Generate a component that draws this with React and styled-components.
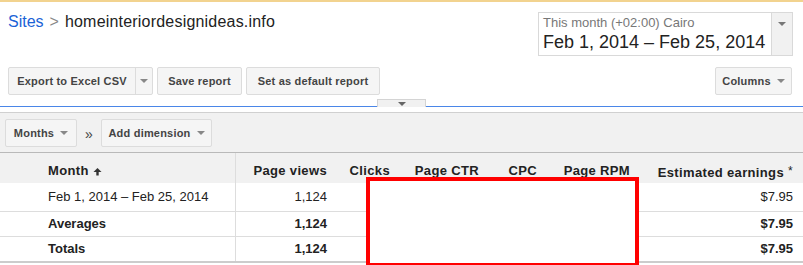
import React from "react";
import styled, { createGlobalStyle } from "styled-components";

const GlobalStyle = createGlobalStyle`
  html, body {
    margin: 0;
    padding: 0;
    background: #fff;
    overflow: hidden;
  }
  body {
    font-family: "Liberation Sans", Arial, sans-serif;
    color: #222;
  }
`;

const Page = styled.div`
  width: 803px;
  height: 265px;
  border-top: 2px solid #f2d38f;
  box-sizing: border-box;
`;

const Top = styled.header`
  display: flex;
  justify-content: space-between;
  align-items: flex-start;
  padding: 10px 10px 0 8px;
`;

const Crumbs = styled.div`
  font-size: 16px;
  line-height: 20px;
  color: #222;
  display: flex;
  gap: 6px;
`;

const CrumbLink = styled.a`
  color: #1a62d6;
  text-decoration: none;
`;

const CrumbSep = styled.span`
  color: #888;
`;

const SiteName = styled.span`
  letter-spacing: 0.2px;
`;

const DatePicker = styled.div`
  display: flex;
  width: 255px;
  height: 44px;
  box-sizing: border-box;
  border: 1px solid #d9d9d9;
`;

const DateText = styled.div`
  flex: 1;
  padding: 2px 0 0 4px;
`;

const DateHint = styled.div`
  font-size: 13px;
  line-height: 16px;
  color: #777;
`;

const DateRange = styled.div`
  font-size: 18px;
  line-height: 22px;
  color: #222;
`;

const DateArrow = styled.div`
  width: 21px;
  background: #f1f1f1;
  border-left: 1px solid #d9d9d9;
  display: flex;
  justify-content: center;
  padding-top: 9px;
  box-sizing: border-box;
`;

const Caret = styled.span`
  display: inline-block;
  width: 0;
  height: 0;
  border-left: ${(p) => p.size || 4}px solid transparent;
  border-right: ${(p) => p.size || 4}px solid transparent;
  border-top: ${(p) => p.size || 4}px solid ${(p) => p.color || "#777"};
`;

const Actions = styled.div`
  display: flex;
  justify-content: space-between;
  padding: 11px 11px 0 8px;
`;

const ButtonGroup = styled.div`
  display: flex;
  gap: 4px;
`;

const Button = styled.button`
  width: ${(p) => p.w}px;
  height: 28px;
  box-sizing: border-box;
  padding: 0;
  background: #f5f5f5;
  border: 1px solid #dcdcdc;
  border-radius: 2px;
  font-family: "Liberation Sans", Arial, sans-serif;
  font-size: 11px;
  font-weight: bold;
  letter-spacing: 0.2px;
  color: #444;
  display: flex;
  align-items: center;
  justify-content: center;
  gap: 6px;
`;

const SplitButton = styled.div`
  display: flex;
  width: 145px;
  height: 28px;
  box-sizing: border-box;
  background: #f5f5f5;
  border: 1px solid #dcdcdc;
  border-radius: 2px;
`;

const SplitLabel = styled.span`
  flex: 1;
  font-size: 11px;
  font-weight: bold;
  letter-spacing: 0.2px;
  color: #444;
  display: flex;
  align-items: center;
  justify-content: center;
  border-right: 1px solid #dcdcdc;
`;

const SplitArrow = styled.span`
  width: 16px;
  display: flex;
  align-items: center;
  justify-content: center;
`;

const Divider = styled.div`
  display: flex;
  align-items: flex-end;
  height: 12px;
`;

const BlueLine = styled.div`
  flex: 1;
  border-bottom: 1px solid #4a86e8;
`;

const Tab = styled.div`
  width: 49px;
  height: 8px;
  box-sizing: border-box;
  background: #f1f1f1;
  border: 1px solid #d4d4d4;
  border-bottom: none;
  display: flex;
  justify-content: center;
  padding-top: 2px;
`;

const Gap = styled.div`
  height: 5px;
  background: #fff;
`;

const Toolbar = styled.div`
  display: flex;
  align-items: flex-start;
  height: 41px;
  box-sizing: border-box;
  padding: 6px 0 0 5px;
  background: #f1f1f1;
  border-top: 1px solid #d0d0d0;
  border-bottom: 1px solid #b9b9b9;
`;

const Chevrons = styled.span`
  width: 24px;
  text-align: center;
  font-size: 14px;
  line-height: 30px;
  color: #444;
`;

const TableWrap = styled.div`
  position: relative;
`;

const Table = styled.table`
  width: 803px;
  table-layout: fixed;
  border-collapse: collapse;
  font-size: 13px;
  border-bottom: 2px solid #ccc;
`;

const HeadCell = styled.th`
  height: 30px;
  box-sizing: border-box;
  padding: 10px 10px 0 ${(p) => (p.left ? 48 : 0)}px;
  background: #f1f1f1;
  font-weight: bold;
  letter-spacing: 0.35px;
  color: #222;
  text-align: ${(p) => (p.left ? "left" : "right")};
  vertical-align: top;
  line-height: 16px;
  white-space: nowrap;
  border-right: ${(p) => (p.left ? "1px solid #ddd" : "none")};
`;

const Row = styled.tr`
  height: ${(p) => p.h}px;
  border-bottom: 1px solid #ddd;
  &:last-child {
    border-bottom: none;
  }
`;

const Cell = styled.td`
  padding: 0 10px 0 ${(p) => (p.left ? 48 : 0)}px;
  text-align: ${(p) => (p.left ? "left" : "right")};
  font-weight: ${(p) => (p.bold ? "bold" : "normal")};
  color: #222;
  white-space: nowrap;
  border-right: ${(p) => (p.left ? "1px solid #ddd" : "none")};
`;

const Star = styled.span`
  font-size: 12px;
  font-weight: normal;
  vertical-align: 2px;
  margin-left: 4px;
`;

const Redaction = styled.div`
  position: absolute;
  left: 366px;
  top: 24px;
  width: 273px;
  height: 90px;
  box-sizing: border-box;
  border: 4px solid #f00;
  background: #fff;
`;

const columns = [
  { key: "views", label: "Page views", width: 102 },
  { key: "clicks", label: "Clicks", width: 63 },
  { key: "ctr", label: "Page CTR", width: 89 },
  { key: "cpc", label: "CPC", width: 58 },
  { key: "rpm", label: "Page RPM", width: 93 },
  { key: "earn", label: "Estimated earnings", width: 163 },
];

const rows = [
  { name: "Feb 1, 2014 – Feb 25, 2014", h: 28, bold: false, views: "1,124", earn: "$7.95" },
  { name: "Averages", h: 25, bold: true, views: "1,124", earn: "$7.95" },
  { name: "Totals", h: 26, bold: true, views: "1,124", earn: "$7.95" },
];

function UpArrow() {
  return (
    <svg width="9" height="9" viewBox="0 0 9 9" style={{ marginLeft: 4, verticalAlign: -1 }}>
      <path d="M4.5 1 L8.5 5 L5.7 5 L5.7 8.5 L3.3 8.5 L3.3 5 L0.5 5 Z" fill="#333" />
    </svg>
  );
}

export default function App() {
  return (
    <Page>
      <GlobalStyle />
      <Top>
        <Crumbs>
          <CrumbLink href="#">Sites</CrumbLink>
          <CrumbSep>&gt;</CrumbSep>
          <SiteName>homeinteriordesignideas.info</SiteName>
        </Crumbs>
        <DatePicker>
          <DateText>
            <DateHint>This month (+02:00) Cairo</DateHint>
            <DateRange>Feb 1, 2014 – Feb 25, 2014</DateRange>
          </DateText>
          <DateArrow>
            <Caret size={4} />
          </DateArrow>
        </DatePicker>
      </Top>

      <Actions>
        <ButtonGroup>
          <SplitButton>
            <SplitLabel>Export to Excel CSV</SplitLabel>
            <SplitArrow>
              <Caret size={4} color="#888" />
            </SplitArrow>
          </SplitButton>
          <Button w={85}>Save report</Button>
          <Button w={134}>Set as default report</Button>
        </ButtonGroup>
        <Button w={77}>
          Columns <Caret size={4} color="#888" />
        </Button>
      </Actions>

      <Divider>
        <BlueLine />
        <Tab>
          <Caret size={4} color="#666" />
        </Tab>
        <BlueLine />
      </Divider>
      <Gap />

      <Toolbar>
        <Button w={72}>
          Months <Caret size={4} color="#888" />
        </Button>
        <Chevrons>»</Chevrons>
        <Button w={111}>
          Add dimension <Caret size={4} color="#888" />
        </Button>
      </Toolbar>

      <TableWrap>
        <Table>
          <colgroup>
            <col style={{ width: 235 }} />
            {columns.map((c) => (
              <col key={c.key} style={{ width: c.width }} />
            ))}
          </colgroup>
          <thead>
            <tr>
              <HeadCell left>
                Month
                <UpArrow />
              </HeadCell>
              {columns.map((c) => (
                <HeadCell key={c.key}>
                  {c.label}
                  {c.key === "earn" && <Star>*</Star>}
                </HeadCell>
              ))}
            </tr>
          </thead>
          <tbody>
            {rows.map((r) => (
              <Row key={r.name} h={r.h}>
                <Cell left bold={r.bold}>
                  {r.name}
                </Cell>
                <Cell bold={r.bold}>{r.views}</Cell>
                <Cell />
                <Cell />
                <Cell />
                <Cell />
                <Cell bold={r.bold}>{r.earn}</Cell>
              </Row>
            ))}
          </tbody>
        </Table>
        <Redaction />
      </TableWrap>
    </Page>
  );
}
